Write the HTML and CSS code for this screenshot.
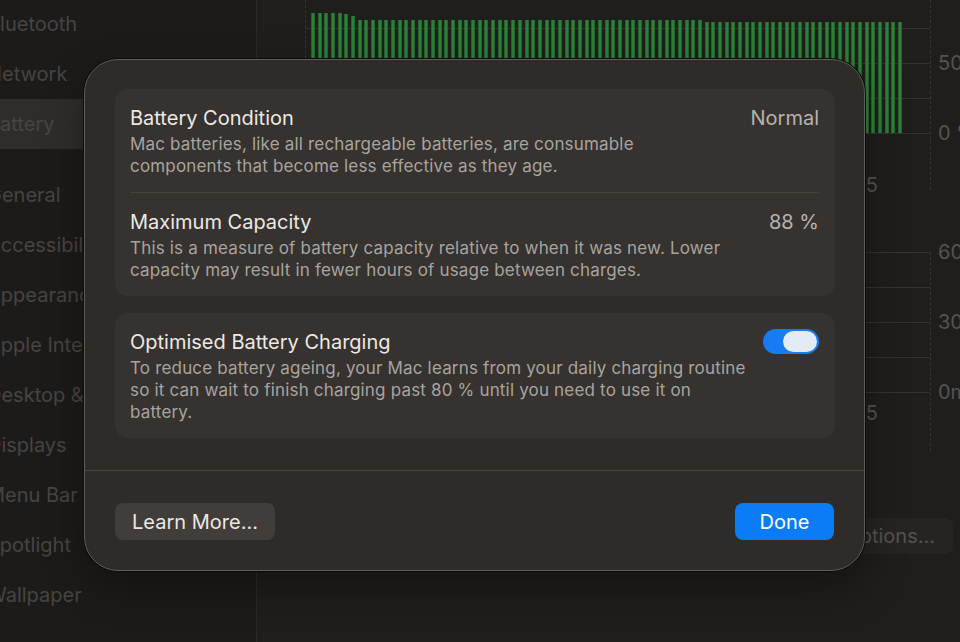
FILE: index.html
```html
<!DOCTYPE html>
<html lang="en">
<head>
<meta charset="utf-8">
<title>Battery</title>
<link rel="stylesheet" href="styles.css">
</head>
<body>
<div class="window">
  <aside class="sidebar">
    <nav class="nav">
      <div class="nav-item"><span>Bluetooth</span></div>
      <div class="nav-item"><span>Network</span></div>
      <div class="nav-item active"><span>Battery</span></div>
      <div class="nav-gap"></div>
      <div class="nav-item"><span>General</span></div>
      <div class="nav-item"><span>Accessibility</span></div>
      <div class="nav-item"><span>Appearance</span></div>
      <div class="nav-item"><span>Apple Intelligence &amp; Siri</span></div>
      <div class="nav-item"><span>Desktop &amp; Dock</span></div>
      <div class="nav-item"><span>Displays</span></div>
      <div class="nav-item"><span>Menu Bar</span></div>
      <div class="nav-item"><span>Spotlight</span></div>
      <div class="nav-item"><span>Wallpaper</span></div>
    </nav>
  </aside>
  <main class="main">
    <section class="chart chart-level">
      <div class="plot plot-level">
        <div class="grid-level">
          <div class="bars" id="bars"></div>
        </div>
        <div class="xaxis">15</div>
      </div>
      <div class="ylabels ylabels-level">
        <span>50</span>
        <span>0 %</span>
      </div>
    </section>
    <section class="chart chart-usage">
      <div class="plot plot-usage">
        <div class="grid-usage"></div>
        <div class="xaxis xaxis-usage">15</div>
      </div>
      <div class="ylabels ylabels-usage">
        <span>60</span>
        <span>30</span>
        <span>0m</span>
      </div>
    </section>
    <div class="options-row">
      <button class="options-btn">Options…</button>
    </div>
  </main>
</div>

<div class="modal">
  <div class="modal-body">
    <div class="card">
      <div class="row">
        <div class="text">
          <div class="title">Battery Condition</div>
          <div class="desc">Mac batteries, like all rechargeable batteries, are consumable<br>components that become less effective as they age.</div>
        </div>
        <div class="value">Normal</div>
      </div>
      <div class="row">
        <div class="text">
          <div class="title">Maximum Capacity</div>
          <div class="desc">This is a measure of battery capacity relative to when it was new. Lower<br>capacity may result in fewer hours of usage between charges.</div>
        </div>
        <div class="value">88 %</div>
      </div>
    </div>
    <div class="card">
      <div class="row">
        <div class="text">
          <div class="title">Optimised Battery Charging</div>
          <div class="desc">To reduce battery ageing, your Mac learns from your daily charging routine<br>so it can wait to finish charging past 80 % until you need to use it on<br>battery.</div>
        </div>
        <div class="toggle"><div class="knob"></div></div>
      </div>
    </div>
  </div>
  <div class="modal-divider"></div>
  <div class="footer">
    <button class="btn btn-secondary">Learn More…</button>
    <button class="btn btn-primary">Done</button>
  </div>
</div>
<script src="script.js"></script>
</body>
</html>
```

FILE: styles.css
```css
* {
  box-sizing: border-box;
  margin: 0;
  padding: 0;
}

html, body {
  width: 960px;
  height: 642px;
  overflow: hidden;
}

body {
  position: relative;
  background: #1e1c1b;
  font-family: Inter, "Noto Sans", sans-serif;
  color: #ebe8e4;
}

.window {
  display: flex;
  height: 642px;
}

/* Sidebar */
.sidebar {
  width: 257px;
  flex: none;
  background: #1d1b1a;
  border-right: 1px solid #2c2a28;
}

.nav {
  width: 250px;
  overflow: hidden;
  margin-top: -1px;
}

.nav-item {
  height: 50px;
  display: flex;
  align-items: center;
  white-space: nowrap;
  font-size: 20px;
  color: #474442;
}

.nav-item span {
  margin-left: -13px;
}

.nav-item.active {
  background: #2f2d2c;
  border-radius: 0 10px 10px 0;
}

.nav-gap {
  height: 21px;
}

/* Main / charts */
.main {
  flex: 1;
  min-width: 0;
  display: flex;
  flex-direction: column;
  padding-left: 48px;
  overflow: hidden;
  background: #201e1c;
}

.chart {
  display: flex;
  flex: none;
}

.plot {
  width: 626px;
  flex: none;
  border-left: 1px dashed #35322f;
  border-right: 1px dashed #35322f;
}

.plot-level {
  height: 190px;
}

.grid-level {
  height: 134px;
  padding-left: 5px;
  background: repeating-linear-gradient(to bottom, transparent 0 28px, #34312e 28px 29px, transparent 29px 35px);
}

.bars {
  width: 592px;
  height: 133px;
  display: flex;
  align-items: flex-end;
  justify-content: space-between;
}

.bars i {
  display: block;
  width: 4px;
  background: #2c823a;
  border-radius: 1px 1px 0 0;
  box-shadow: inset 1px 0 #22662c, inset -1px 0 #22662c;
}

.xaxis {
  display: flex;
  justify-content: flex-end;
  padding-top: 39px;
  padding-right: 52px;
  font-size: 20px;
  line-height: 24px;
  color: #56534f;
}

.chart-usage {
  margin-top: 62px;
}

.plot-usage {
  height: 199px;
}

.grid-usage {
  height: 141px;
  background: repeating-linear-gradient(to bottom, #34312e 0 1px, transparent 1px 35px);
}

.xaxis-usage {
  padding-top: 8px;
}

.ylabels {
  flex: none;
  display: flex;
  flex-direction: column;
  padding-left: 7px;
  font-size: 20px;
  line-height: 24px;
  color: #56534f;
  white-space: nowrap;
}

.ylabels-level {
  padding-top: 51px;
  gap: 46px;
}

.ylabels-usage {
  margin-top: -12px;
  gap: 46px;
}

.options-row {
  display: flex;
  justify-content: flex-end;
  padding-right: 7px;
  margin-top: 67px;
}

.options-btn {
  height: 36px;
  padding: 0 18px;
  border: none;
  border-radius: 8px;
  background: #262422;
  color: #57534f;
  font-family: inherit;
  font-size: 20px;
}

/* Modal */
.modal {
  position: absolute;
  left: 84px;
  top: 59px;
  width: 781px;
  height: 512px;
  display: flex;
  flex-direction: column;
  background: #2e2b28;
  border: 1px solid #5f5b56;
  border-radius: 34px;
  box-shadow: 0 0 0 1px #0e0d0c, 0 16px 40px rgba(0, 0, 0, 0.35);
}

.modal-body {
  display: flex;
  flex-direction: column;
  gap: 17px;
  padding: 29px 29px 32px 30px;
}

.card {
  background: #353230;
  border-radius: 13px;
  padding: 0 16px 0 15px;
}

.row {
  display: flex;
  justify-content: space-between;
  align-items: flex-start;
  gap: 12px;
  padding: 17px 0 15px;
}

.row + .row {
  border-top: 1px solid #45423e;
}

.title {
  font-size: 20px;
  line-height: 24px;
  color: #ece9e5;
}

.desc {
  margin-top: 3px;
  font-size: 17px;
  line-height: 22px;
  letter-spacing: 0.18px;
  white-space: nowrap;
  color: #a8a49f;
}

.value {
  font-size: 20px;
  line-height: 24px;
  color: #b7b3ae;
  white-space: nowrap;
}

.toggle {
  flex: none;
  width: 56px;
  height: 25px;
  margin-top: -1px;
  padding: 2px;
  display: flex;
  justify-content: flex-end;
  border-radius: 13px;
  background: #157cf4;
}

.knob {
  width: 34px;
  height: 21px;
  border-radius: 11px;
  background: #e4ebf8;
}

.modal-divider {
  height: 1px;
  background: #48453f;
}

.footer {
  display: flex;
  justify-content: space-between;
  padding: 32px 30px 0 30px;
}

.btn {
  height: 37px;
  border: none;
  border-radius: 8px;
  font-family: inherit;
  font-size: 20px;
  line-height: 24px;
}

.btn-secondary {
  width: 160px;
  background: #403d3a;
  color: #ebe8e4;
}

.btn-primary {
  width: 99px;
  background: #0c7cf6;
  color: #ffffff;
}
```

FILE: script.js
```js
(function () {
  var bars = document.getElementById('bars');
  for (var i = 0; i < 89; i++) {
    var top;
    if (i < 5) top = 13;
    else if (i === 5) top = 14;
    else if (i === 6) top = 16;
    else if (i < 59) top = 20;
    else top = 22;
    var el = document.createElement('i');
    el.style.height = (133 - top) + 'px';
    bars.appendChild(el);
  }
})();
```
